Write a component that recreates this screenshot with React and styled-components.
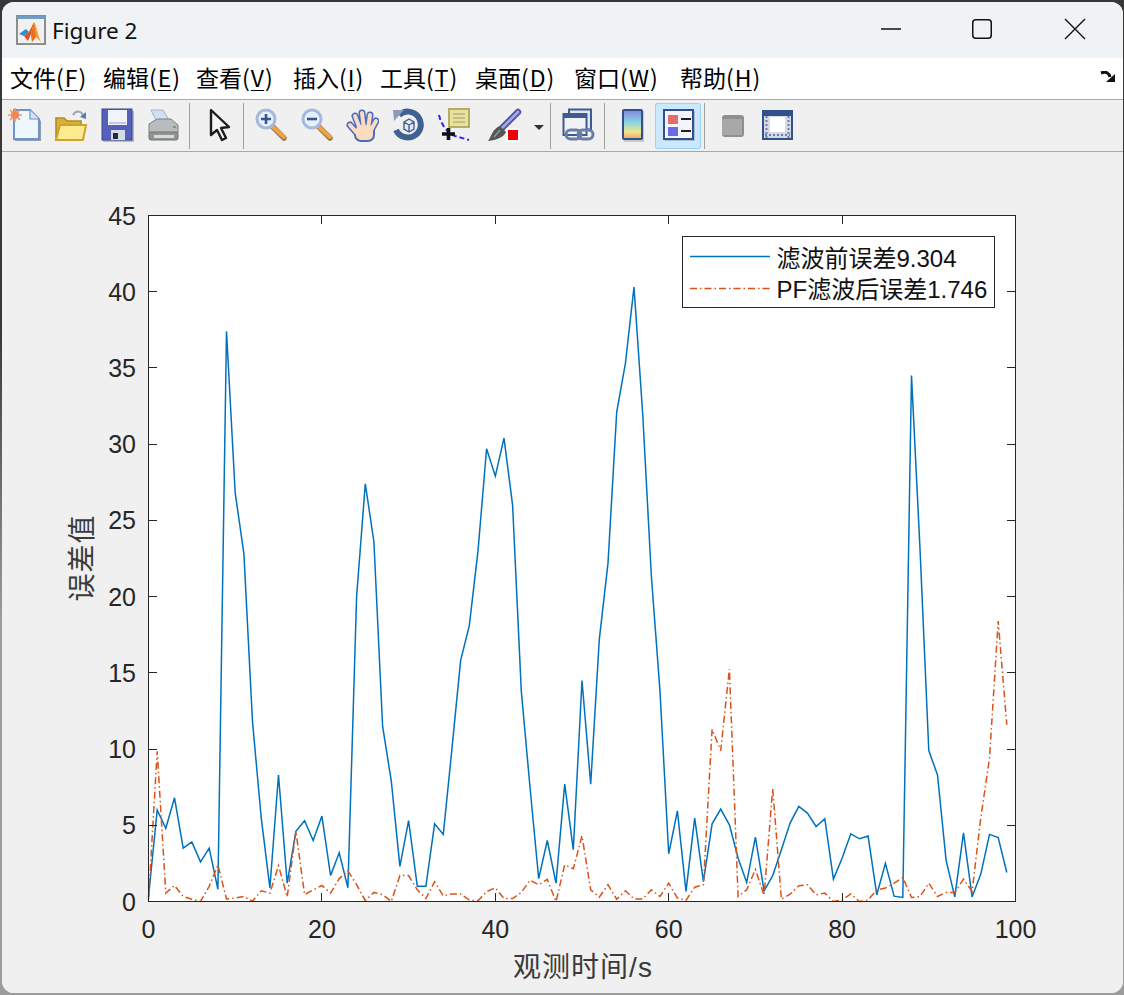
import React from "react";
import styled, { createGlobalStyle } from "styled-components";

const GlobalStyle = createGlobalStyle`
	html, body {
		margin: 0;
		padding: 0;
		background: #9c9c9c;
	}
`;

//Chart data, one value per second
const before = [
	0.3, 6, 4.8, 6.8, 3.5, 3.9, 2.6, 3.5, 0.8, 37.4, 26.8, 22.8, 11.8, 5.5, 0.9, 8.3, 1.2, 4.6, 5.3, 4, 5.6,
	1.7, 3.2, 0.9, 20, 27.4, 23.6, 11.5, 7.9, 2.3, 5.3, 1, 1, 5.1, 4.4, 10, 15.8, 18.1, 23, 29.7, 27.9, 30.4,
	26, 13.8, 7.5, 1.5, 4, 1.2, 7.7, 3.4, 14.5, 7.7, 17.2, 22.2, 32.1, 35.3, 40.3, 32, 21.3, 13.8, 3.13, 5.95,
	0.66, 5.47, 1.3, 5.1, 6.06, 5.03, 2.84, 1.25, 4.22, 0.7, 1.7, 3.4, 5.14, 6.24, 5.8, 4.92, 5.43, 1.47, 2.84,
	4.44, 4.11, 4.29, 0.44, 2.5, 0.35, 0.26, 34.5, 23, 9.9, 8.3, 2.7, 0.3, 4.5, 0.3, 1.8, 4.4, 4.2, 1.9,
];
const after = [
	0.1, 9.85, 0.55, 1.05, 0.33, 0.15, 0, 1, 2.4, 0.17, 0.22, 0.33, 0.02, 0.7, 0.55, 2.35, 0.3, 4.6, 0.45, 0.76,
	1.05, 0.55, 1.5, 2, 1.1, 0.05, 0.6, 0.45, 0, 1.7, 1.7, 0.76, 0.2, 1.3, 0.37, 0.5, 0.5, 0.1, 0.05, 0.65, 0.9,
	0.2, 0.2, 0.6, 1.4, 1.1, 1.45, 0, 2.4, 2.15, 4.3, 0.77, 0.28, 1.1, 0.15, 0.7, 0.17, 0.17, 0.77, 0.33, 1.2,
	0.22, 0.07, 0.94, 1.1, 11.3, 9.9, 15.25, 0.33, 0.77, 2.1, 0.4, 7.4, 0.15, 0.48, 1.03, 1.1, 0.44, 0.55, 0, 0.1,
	0.5, 0, 0.1, 0.77, 0.88, 1.2, 1.57, 0.26, 0.33, 1.2, 0.33, 0.6, 0.6, 1.47, 0.66, 5.5, 9.4, 18.4, 11.6,
];

//Axes box in page pixels
const LEFT = 148.5;
const RIGHT = 1015.5;
const TOP = 215.5;
const BOTTOM = 901.5;
const xPos = (v) => LEFT + (v / 100) * (RIGHT - LEFT);
const yPos = (v) => BOTTOM - (v / 45) * (BOTTOM - TOP);
const toPoints = (data) => data.map((v, i) => `${xPos(i).toFixed(1)},${yPos(v).toFixed(1)}`).join(" ");
const snap = (v) => Math.floor(v) + 0.5;

const xTicks = [0, 20, 40, 60, 80, 100];
const yTicks = [0, 5, 10, 15, 20, 25, 30, 35, 40, 45];
//label, mnemonic, slot width
const menus = [
	["文件", "F", 93],
	["编辑", "E", 93],
	["查看", "V", 97],
	["插入", "I", 87],
	["工具", "T", 95],
	["桌面", "D", 99],
	["窗口", "W", 106],
	["帮助", "H", 90],
];

const MatlabIcon = () => (
	<svg width="30" height="30" viewBox="0 0 30 30">
		<rect x="1" y="1" width="28" height="28" fill="#f1f1f1" stroke="#8d8d8d" strokeWidth="2" />
		<rect x="1" y="1" width="28" height="3" fill="#6f9cc4" />
		<path d="M3 19 L10 14 L13 17 L8 21 Z" fill="#2f8fd0" />
		<path d="M8 21 L13 17 L18 7 L15 19 L12 26 Z" fill="#d9541e" />
		<path d="M18 7 C21 12 22 21 25 27 L20 22 L16 27 L15 19 Z" fill="#f0a030" />
		<path d="M18 7 L19 16 L20 22 L16 27 L15 19 Z" fill="#e8701f" />
	</svg>
);

const NewIcon = () => (
	<svg width="34" height="34" viewBox="0 0 34 34">
		<path d="M7 4 H24 L33 13 V33 H7 Z" fill="#76889f" opacity="0.8" />
		<path d="M6 2 H22 L31 11 V31 H6 Z" fill="#eef6fe" stroke="#6f92c8" strokeWidth="2" />
		<path d="M22 2 V11 H31" fill="#d7e4f5" stroke="#6f92c8" strokeWidth="1.2" />
		<g stroke="#ee9a70" strokeWidth="1.6">
			<path d="M7 0 V14 M0 7 H14 M2 2 L12 12 M12 2 L2 12" />
		</g>
		<circle cx="7" cy="7" r="4" fill="#ee8a58" />
	</svg>
);

const OpenIcon = () => (
	<svg width="34" height="34" viewBox="0 0 34 34">
		<path d="M19 7 C22 2 27 3 29 7" fill="none" stroke="#9aa6b8" strokeWidth="2" />
		<path d="M32 4 L32 11 L26 9 Z" fill="#4f7fb0" />
		<path d="M2 10 H10 L13 13 H27 V31 H2 Z" fill="#dcae3a" stroke="#b58a1e" strokeWidth="1.6" />
		<path d="M6 17 H32 L29 32 H2 Z" fill="#fdec90" stroke="#cfa32a" strokeWidth="2" />
	</svg>
);

const SaveIcon = () => (
	<svg width="34" height="34" viewBox="0 0 34 34">
		<rect x="3" y="3" width="31" height="31" fill="#8894ac" opacity="0.6" />
		<rect x="2" y="1" width="30" height="31" fill="#5560bb" stroke="#3a4490" />
		<rect x="8" y="2" width="19" height="15" fill="#f2f4fb" />
		<rect x="9" y="14" width="17" height="2" fill="#c4cae6" />
		<rect x="11" y="22" width="14" height="10" fill="#d6d9e6" />
		<rect x="13" y="25" width="5" height="6" fill="#23283f" />
	</svg>
);

const PrintIcon = () => (
	<svg width="34" height="34" viewBox="0 0 34 34">
		<path d="M5 2 H17 L24 14 H11 Z" fill="#cfe0f2" stroke="#9fb2c6" />
		<path d="M3 16 L11 11 H25 L32 17 V25 H3 Z" fill="#b9bcbc" stroke="#7d7f7f" />
		<rect x="3" y="24" width="29" height="8" rx="2" fill="#929494" stroke="#6f7171" />
		<rect x="8" y="27" width="20" height="3" fill="#d8dada" />
		<rect x="27" y="18" width="3" height="2" fill="#62a86a" />
	</svg>
);

const PointerIcon = () => (
	<svg width="34" height="34" viewBox="0 0 34 34">
		<path
			d="M8 2 L8 27 L14 22 L19 32 L23 30 L18 20 L26 19 Z"
			fill="#f4f4f4"
			stroke="#1c1c1c"
			strokeWidth="2.400"
			strokeLinejoin="round"
		/>
	</svg>
);

const ZoomIcon = ({ plus }) => (
	<svg width="34" height="34" viewBox="0 0 34 34">
		<path d="M20 19 L31 30" stroke="#8d7a55" strokeWidth="5.5" strokeLinecap="round" />
		<path d="M20 19 L31 29" stroke="#efa33f" strokeWidth="4" strokeLinecap="round" />
		<circle cx="13" cy="11" r="9" fill="#e6f1fb" stroke="#a5b9dd" strokeWidth="3" />
		<path d={plus ? "M8 11 H18 M13 6 V16" : "M8 11 H18"} stroke="#34558f" strokeWidth="2.6" />
	</svg>
);

const handLines = "M5 17 L12 25 M10 8 L15 21 M17 5 L19 21 M25 7 L23 21 M31 13 L26 22";
const HandIcon = () => (
	<svg width="34" height="34" viewBox="0 0 34 34">
		<path d={handLines} stroke="#4a6cc0" strokeWidth="7" strokeLinecap="round" />
		<rect x="10" y="16" width="19" height="17" rx="6" fill="#fbdcc0" stroke="#4a6cc0" strokeWidth="2" />
		<path d={handLines} stroke="#fbdcc0" strokeWidth="4" strokeLinecap="round" />
	</svg>
);

const RotateIcon = () => (
	<svg width="34" height="34" viewBox="0 0 34 34">
		<path d="M8 7 A13 13 0 1 1 5 22" fill="none" stroke="#3f6092" strokeWidth="6" />
		<path d="M2 2 L13 2 L3 13 Z" fill="#8a9db8" />
		<path d="M13 14 L18 11 L23 14 V21 L18 24 L13 21 Z M13 14 L18 17 L23 14 M18 17 V24" fill="#e4e9f1" stroke="#3f6092" strokeWidth="1.400" />
	</svg>
);

const DataTipIcon = () => (
	<svg width="34" height="34" viewBox="0 0 34 34">
		<path d="M2 7 C4 16 10 25 18 28 L32 32" fill="none" stroke="#2a2af0" strokeWidth="2" strokeDasharray="5 3" />
		<rect x="12" y="1" width="20" height="18" fill="#e8e2a0" stroke="#b5ae62" strokeWidth="2" />
		<path d="M16 6 H28 M16 10 H28 M16 14 H28" stroke="#b8b27a" strokeWidth="1.5" />
		<path d="M5 26 H18 M11.500 20 V32" stroke="#111" strokeWidth="3.600" />
	</svg>
);

const BrushIcon = () => (
	<svg width="34" height="34" viewBox="0 0 34 34">
		<path d="M30 4 L13 21" stroke="#4f57a8" strokeWidth="6.5" strokeLinecap="round" />
		<path d="M30 4 L13 21" stroke="#a4aae4" strokeWidth="2.600" strokeLinecap="round" />
		<path d="M12 18 L18 24 C16 29 9 32 0 33 C4 28 4 21 12 18 Z" fill="#555" />
		<path d="M12 22 L6 29" stroke="#999" strokeWidth="1.500" />
		<rect x="18" y="20" width="14" height="14" fill="#fff" />
		<rect x="20" y="22" width="10" height="10" fill="#f00000" />
	</svg>
);

const LinkIcon = () => (
	<svg width="34" height="34" viewBox="0 0 34 34">
		<rect x="8" y="1.500" width="22" height="20" fill="#dfe7f2" stroke="#3f5a91" strokeWidth="2" />
		<rect x="2.500" y="6" width="23" height="21" fill="#eff3f8" stroke="#3f5a91" strokeWidth="2" />
		<rect x="2.500" y="6" width="23" height="4" fill="#3f5a91" />
		<g fill="none" stroke="#6b7ea4" strokeWidth="3">
			<rect x="5" y="22" width="15" height="9" rx="4.500" />
			<rect x="17" y="22" width="15" height="9" rx="4.500" />
		</g>
	</svg>
);

const ColorbarIcon = () => (
	<svg width="34" height="34" viewBox="0 0 34 34">
		<defs>
			<linearGradient id="colorbarFill" x1="0" y1="0" x2="0" y2="1">
				<stop offset="0" stopColor="#7f86dc" />
				<stop offset="0.45" stopColor="#8fd8e0" />
				<stop offset="0.75" stopColor="#f2e48a" />
				<stop offset="1" stopColor="#eda56a" />
			</linearGradient>
		</defs>
		<rect x="9" y="3" width="20" height="31" fill="#a8b0bc" opacity="0.6" />
		<rect x="8" y="2" width="19" height="29" rx="1" fill="url(#colorbarFill)" stroke="#33508a" strokeWidth="2" />
	</svg>
);

const LegendIcon = () => (
	<svg width="34" height="34" viewBox="0 0 34 34">
		<rect x="4" y="3" width="30" height="30" fill="#8da2bc" opacity="0.6" />
		<rect x="3" y="2" width="29" height="29" fill="#f3f5fa" stroke="#34508c" strokeWidth="2" />
		<rect x="7" y="7" width="10" height="9" fill="#e96a6a" />
		<rect x="7" y="19" width="10" height="9" fill="#6a6ae4" />
		<path d="M20 11 H30 M20 23 H30" stroke="#222" strokeWidth="2.2" />
	</svg>
);

const GrayBoxIcon = () => (
	<svg width="34" height="34" viewBox="0 0 34 34">
		<rect x="6" y="7" width="22" height="22" rx="3" fill="#8f8f8f" />
		<rect x="6" y="11" width="20" height="16" fill="#a8a8a8" />
	</svg>
);

const FrameIcon = () => (
	<svg width="34" height="34" viewBox="0 0 34 34">
		<rect x="1" y="3" width="29" height="28" fill="#d5dbe6" stroke="#34508c" strokeWidth="2" />
		<rect x="1" y="3" width="29" height="5" fill="#34508c" />
		<rect x="8" y="9" width="15" height="15" fill="#fff" />
		<path d="M4.500 8 V30 M26.500 8 V30 M3 27 H28" fill="none" stroke="#6f7f9c" strokeWidth="2" strokeDasharray="2 2" />
	</svg>
);

const App = () => {
	return (
		<>
			<GlobalStyle />
			<Page>
				<Window>
					<TitleBar>
						<MatlabIcon />
						<TitleText>Figure 2</TitleText>
						<Controls>
							<WindowButton>
								<svg width="22" height="22" viewBox="0 0 22 22">
									<path d="M1 11 H21" stroke="#111" strokeWidth="1.5" />
								</svg>
							</WindowButton>
							<WindowButton>
								<svg width="22" height="22" viewBox="0 0 22 22">
									<rect x="1.750" y="1.750" width="18.500" height="18.500" rx="3" fill="none" stroke="#111" strokeWidth="1.500" />
								</svg>
							</WindowButton>
							<WindowButton $left={2}>
								<svg width="22" height="22" viewBox="0 0 22 22">
									<path d="M1 1 L21 21 M21 1 L1 21" stroke="#111" strokeWidth="1.400" />
								</svg>
							</WindowButton>
						</Controls>
					</TitleBar>
					<MenuBar>
						{menus.map(([label, key, width]) => (
							<MenuItem key={key} $width={width}>
								{label}(<Mnemonic>{key}</Mnemonic>)
							</MenuItem>
						))}
						<DockArrow>
							<svg width="16" height="12" viewBox="0 0 16 12">
								<path d="M1 2 C6 0 9 2 10 6" fill="none" stroke="#111" strokeWidth="3" />
								<path d="M15 3 V11 H6 Z" fill="#111" />
							</svg>
						</DockArrow>
					</MenuBar>
					<Toolbar>
						<Tool><NewIcon /></Tool>
						<Tool><OpenIcon /></Tool>
						<Tool><SaveIcon /></Tool>
						<Tool><PrintIcon /></Tool>
						<Separator $left={3} $right={7} />
						<Tool><PointerIcon /></Tool>
						<Separator $left={0} $right={3} />
						<Tool><ZoomIcon plus /></Tool>
						<Tool><ZoomIcon /></Tool>
						<Tool><HandIcon /></Tool>
						<Tool><RotateIcon /></Tool>
						<Tool><DataTipIcon /></Tool>
						<Tool $width={56}><BrushIcon /></Tool>
						<Tool $width={12}><Caret /></Tool>
						<Separator $left={5} $right={4} />
						<Tool><LinkIcon /></Tool>
						<Separator $left={3} $right={4} />
						<Tool><ColorbarIcon /></Tool>
						<Tool $active><LegendIcon /></Tool>
						<Separator $left={3} $right={5} />
						<Tool><GrayBoxIcon /></Tool>
						<Tool><FrameIcon /></Tool>
					</Toolbar>
					<Canvas>
						<Chart viewBox="2 152 1121 841" width="1121" height="841">
							<rect x={LEFT} y={TOP} width={RIGHT - LEFT} height={BOTTOM - TOP} fill="#fff" />
							<polyline points={toPoints(before)} fill="none" stroke="#0072bd" strokeWidth="1.500" />
							<polyline
								points={toPoints(after)}
								fill="none"
								stroke="#d95319"
								strokeWidth="1.500"
								strokeDasharray="7 3 1.500 3"
							/>
							<rect x={LEFT} y={TOP} width={RIGHT - LEFT} height={BOTTOM - TOP} fill="none" stroke="#262626" />
							{xTicks.map((t) => (
								<g key={t}>
									<path d={`M${snap(xPos(t))} ${BOTTOM} v-8.500 M${snap(xPos(t))} ${TOP} v8.500`} stroke="#262626" />
									<TickLabel x={xPos(t)} y={938} textAnchor="middle">{t}</TickLabel>
								</g>
							))}
							{yTicks.map((t) => (
								<g key={t}>
									<path d={`M${LEFT} ${snap(yPos(t))} h8.500 M${RIGHT} ${snap(yPos(t))} h-8.500`} stroke="#262626" />
									<TickLabel x={136} y={yPos(t) + 9} textAnchor="end">{t}</TickLabel>
								</g>
							))}
							<AxisLabel x={583} y={977} textAnchor="middle">观测时间/s</AxisLabel>
							<AxisLabel transform="translate(92 558) rotate(-90)" textAnchor="middle">误差值</AxisLabel>

							<rect x="682.500" y="236.500" width="312" height="71" fill="#fff" stroke="#262626" />
							<path d="M690 256.500 H770" stroke="#0072bd" strokeWidth="1.500" />
							<path d="M690 288.500 H770" stroke="#d95319" strokeWidth="1.500" strokeDasharray="7 3 1.500 3" />
							<LegendLabel x="776.500" y="267">滤波前误差9.304</LegendLabel>
							<LegendLabel x="776.500" y="298">PF滤波后误差1.746</LegendLabel>
						</Chart>
					</Canvas>
				</Window>
			</Page>
		</>
	);
};

const Page = styled.div`
	width: 1124px;
	height: 995px;
	box-sizing: border-box;
	padding: 2px 1px 2px 2px;
	background: linear-gradient(#383838 0, #383838 330px, #9c9c9c 620px);
`;

const Window = styled.div`
	width: 1121px;
	height: 991px;
	display: flex;
	flex-direction: column;
	border-radius: 12px;
	overflow: hidden;
	background: #f0f0f0;
`;

const TitleBar = styled.div`
	height: 56px;
	flex: none;
	display: flex;
	align-items: center;
	padding-left: 14px;
	background: #eff3f6;
	svg {
		display: block;
	}
`;

const TitleText = styled.span`
	margin-left: 6px;
	font-family: "Noto Sans", "Open Sans", sans-serif;
	font-size: 22.5px;
	color: #111;
`;

const Controls = styled.div`
	margin-left: auto;
	margin-bottom: 2px;
	display: flex;
	gap: 69px;
	padding-right: 37px;
`;

const WindowButton = styled.div`
	width: 22px;
	height: 22px;
	margin-left: ${(p) => p.$left || 0}px;
`;

const MenuBar = styled.div`
	height: 42px;
	flex: none;
	display: flex;
	align-items: center;
	padding: 0 0 3px 8px;
	box-sizing: border-box;
	background: #fff;
	border-bottom: 1px solid #a8a8a8;
`;

const MenuItem = styled.span`
	width: ${(p) => p.$width}px;
	flex: none;
	font-family: "Noto Sans CJK SC", sans-serif;
	font-size: 23px;
	color: #000;
	white-space: nowrap;
`;

const Mnemonic = styled.span`
	margin: 0 1px;
	text-decoration: underline;
	text-underline-offset: 3px;
	text-decoration-thickness: 1px;
`;

const DockArrow = styled.div`
	margin-left: auto;
	padding-right: 7px;
	svg {
		display: block;
	}
`;

const Toolbar = styled.div`
	height: 52px;
	flex: none;
	display: flex;
	align-items: stretch;
	padding: 3px 0 2px;
	box-sizing: border-box;
	background: #f0f0f0;
	border-bottom: 1px solid #a8a8a8;
`;

const Tool = styled.div`
	width: ${(p) => p.$width || 46}px;
	flex: none;
	display: flex;
	justify-content: center;
	padding-top: 5px;
	box-sizing: border-box;
	background: ${(p) => (p.$active ? "#cce8ff" : "transparent")};
	box-shadow: ${(p) => (p.$active ? "inset 0 0 0 1px #99d1ff" : "none")};
	border-radius: ${(p) => (p.$active ? "3px" : "0")};
	svg {
		display: block;
		filter: blur(0.45px);
	}
`;

const Caret = styled.div`
	width: 0;
	height: 0;
	margin-top: 17px;
	border-left: 5px solid transparent;
	border-right: 5px solid transparent;
	border-top: 5px solid #333;
`;

const Separator = styled.div`
	width: 1px;
	flex: none;
	margin-left: ${(p) => p.$left}px;
	margin-right: ${(p) => p.$right}px;
	background: #a0a0a0;
`;

const Canvas = styled.div`
	flex: 1;
	background: #f0f0f0;
`;

const Chart = styled.svg`
	display: block;
`;

const TickLabel = styled.text`
	font-family: "Liberation Sans", Arial, sans-serif;
	font-size: 25px;
	fill: #262626;
`;

const AxisLabel = styled.text`
	font-family: "Liberation Sans", "Noto Sans CJK SC", sans-serif;
	font-size: 28px;
	letter-spacing: 1px;
	fill: #3a3a3a;
`;

const LegendLabel = styled.text`
	font-family: "Liberation Sans", "Noto Sans CJK SC", sans-serif;
	font-size: 24px;
	fill: #111;
`;

export default App;
